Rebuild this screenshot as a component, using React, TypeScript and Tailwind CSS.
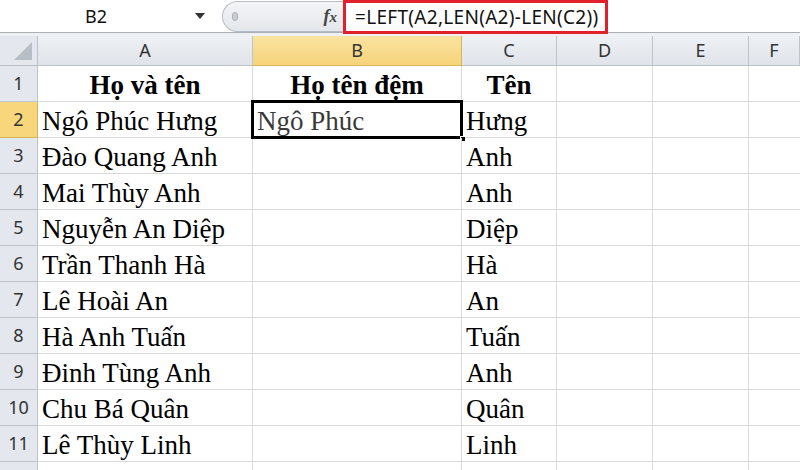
import React from "react";

const cols = [
  { key: "A", w: 215 },
  { key: "B", w: 209 },
  { key: "C", w: 95 },
  { key: "D", w: 96 },
  { key: "E", w: 96 },
  { key: "F", w: 51 },
];

const rows: [string, string, string][] = [
  ["Ngô Phúc Hưng", "Ngô Phúc", "Hưng"],
  ["Đào Quang Anh", "", "Anh"],
  ["Mai Thùy Anh", "", "Anh"],
  ["Nguyễn An Diệp", "", "Diệp"],
  ["Trần Thanh Hà", "", "Hà"],
  ["Lê Hoài An", "", "An"],
  ["Hà Anh Tuấn", "", "Tuấn"],
  ["Đinh Tùng Anh", "", "Anh"],
  ["Chu Bá Quân", "", "Quân"],
  ["Lê Thùy Linh", "", "Linh"],
];

const serif = { fontFamily: '"Liberation Serif", "Times New Roman", serif' };
const sans = { fontFamily: '"Noto Sans", "DejaVu Sans", sans-serif' };

export default function App() {
  return (
    <div className="w-[800px] h-[470px] overflow-hidden bg-white relative" style={sans}>
      {/* Formula bar */}
      <div className="flex h-[33px] border-b border-[#a9b0b8] bg-white">
        <div className="w-[222px] shrink-0 flex items-center relative">
          <span className="w-[192px] text-center text-[18px] text-[#111] pt-[1px]">B2</span>
          <svg width="12" height="8" viewBox="0 0 12 8" className="ml-[2px]">
            <path d="M1 1 L11 1 L6 7 Z" fill="#333" />
          </svg>
        </div>
        <div className="w-[121px] shrink-0 flex items-center bg-white">
          <div className="h-[31px] flex-1 mt-[1px] rounded-l-full border border-r-0 border-[#b6bcc6] bg-gradient-to-b from-[#f4f5f7] to-[#e3e6ea] flex items-center justify-between pl-[9px] pr-[6px]">
            <span className="w-[6px] h-[9px] rounded-full bg-[#c8ccd2] border border-[#b0b5bc]" />
            <span className="text-[18px] italic font-bold text-[#444]" style={serif}>
              f<span className="text-[15px]">x</span>
            </span>
          </div>
        </div>
        <div className="w-[265px] shrink-0 h-[34px] border-[3px] border-[#e0202a] flex items-center pl-[9px]">
          <span className="text-[19px] text-[#111] tracking-[0.3px] whitespace-nowrap">=LEFT(A2,LEN(A2)-LEN(C2))</span>
        </div>
        <div className="flex-1" />
      </div>
      <div className="h-[3px] bg-[#eef0f3]" />

      {/* Column headers */}
      <div className="flex h-[30px]">
        <div className="w-[38px] shrink-0 h-full border-r border-b border-[#b9c0c9] bg-[#e4e8ee] relative">
          <svg width="20" height="20" viewBox="0 0 20 20" className="absolute right-[4px] bottom-[4px]">
            <path d="M19 1 L19 19 L1 19 Z" fill="#b8bec6" />
          </svg>
        </div>
        {cols.map((c) => (
          <div
            key={c.key}
            style={{ width: c.w }}
            className={`shrink-0 h-full border-r border-b flex items-center justify-center text-[18px] ${
              c.key === "B"
                ? "bg-gradient-to-b from-[#fbe3a0] to-[#f6d37a] border-[#d9b55a] text-[#333]"
                : "bg-gradient-to-b from-[#eef1f5] to-[#dfe4ea] border-[#bcc3cb] text-[#333]"
            }`}
          >
            {c.key}
          </div>
        ))}
      </div>

      {/* Row 1 */}
      <div className="flex h-[36px]">
        <div className="w-[38px] shrink-0 h-full border-r border-b border-[#bcc3cb] bg-[#e4e8ee] flex items-center justify-center text-[18px] text-[#333]">
          1
        </div>
        <div style={{ width: 215, ...serif }} className="shrink-0 h-full border-r border-b border-[#d9d9d9] flex items-end justify-center pb-[2px] text-[27px] font-bold text-black leading-none">
          Họ và tên
        </div>
        <div style={{ width: 209, ...serif }} className="shrink-0 h-full border-r border-b border-[#d9d9d9] flex items-end justify-center pb-[2px] text-[27px] font-bold text-black leading-none">
          Họ tên đệm
        </div>
        <div style={{ width: 95, ...serif }} className="shrink-0 h-full border-r border-b border-[#d9d9d9] flex items-end justify-center pb-[2px] text-[27px] font-bold text-black leading-none">
          Tên
        </div>
        <div style={{ width: 96 }} className="shrink-0 h-full border-r border-b border-[#d9d9d9]" />
        <div style={{ width: 96 }} className="shrink-0 h-full border-r border-b border-[#d9d9d9]" />
        <div style={{ width: 51 }} className="shrink-0 h-full border-b border-[#d9d9d9]" />
      </div>

      {rows.map((r, i) => {
        const n = i + 2;
        const sel = n === 2;
        return (
          <div key={n} className="flex h-[36px]">
            <div
              className={`w-[38px] shrink-0 h-full border-r border-b flex items-center justify-center text-[18px] text-[#333] ${
                sel ? "bg-[#f7d67c] border-[#d9b55a]" : "bg-[#e4e8ee] border-[#bcc3cb]"
              }`}
            >
              {n}
            </div>
            <div style={{ width: 215, ...serif }} className="shrink-0 h-full border-r border-b border-[#d9d9d9] flex items-end pl-[4px] pb-[2px] text-[27px] text-black leading-none whitespace-nowrap">
              {r[0]}
            </div>
            <div style={{ width: 209, ...serif }} className="shrink-0 h-full border-r border-b border-[#d9d9d9] flex items-end pl-[4px] pb-[2px] text-[27px] text-[#3a3a3a] leading-none whitespace-nowrap relative">
              {r[1]}
              {sel && (
                <>
                  <div className="absolute left-[-2px] top-[-2px] right-[-2px] bottom-[-2px] border-[3px] border-black pointer-events-none" />
                  <div className="absolute right-[-5px] bottom-[-5px] w-[6px] h-[6px] bg-black border border-white" />
                </>
              )}
            </div>
            <div style={{ width: 95, ...serif }} className="shrink-0 h-full border-r border-b border-[#d9d9d9] flex items-end pl-[4px] pb-[2px] text-[27px] text-black leading-none whitespace-nowrap">
              {r[2]}
            </div>
            <div style={{ width: 96 }} className="shrink-0 h-full border-r border-b border-[#d9d9d9]" />
            <div style={{ width: 96 }} className="shrink-0 h-full border-r border-b border-[#d9d9d9]" />
            <div style={{ width: 51 }} className="shrink-0 h-full border-b border-[#d9d9d9]" />
          </div>
        );
      })}

      <div className="flex h-[20px]">
        <div className="w-[38px] shrink-0 h-full border-r border-[#bcc3cb] bg-[#e4e8ee]" />
        <div style={{ width: 215 }} className="shrink-0 h-full border-r border-[#d9d9d9]" />
        <div style={{ width: 209 }} className="shrink-0 h-full border-r border-[#d9d9d9]" />
        <div style={{ width: 95 }} className="shrink-0 h-full border-r border-[#d9d9d9]" />
        <div style={{ width: 96 }} className="shrink-0 h-full border-r border-[#d9d9d9]" />
        <div style={{ width: 96 }} className="shrink-0 h-full border-r border-[#d9d9d9]" />
      </div>
    </div>
  );
}
